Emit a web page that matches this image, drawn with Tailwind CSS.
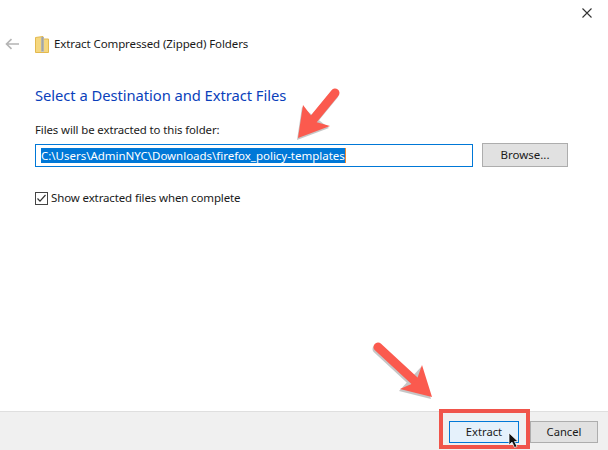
<!DOCTYPE html>
<html lang="en">
<head>
  <meta charset="UTF-8" />
  <title>Extract Compressed (Zipped) Folders</title>
  <script src="https://cdn.jsdelivr.net/npm/@tailwindcss/browser@4"></script>
</head>
<body class="relative w-[608px] h-[450px] overflow-hidden bg-white font-['Noto_Sans',sans-serif] text-[12px] text-[#1a1a1a] flex flex-col">

  <!-- close button -->
  <div class="h-[9px] flex justify-end pr-[16px] pt-[8px]">
    <svg width="10" height="10" viewBox="0 0 10 10" class="shrink-0" fill="none" stroke="#333" stroke-width="1.1"><path d="M0.5 0.5L9.5 9.5M9.5 0.5L0.5 9.5"/></svg>
  </div>

  <!-- title row -->
  <div class="flex items-center h-[20px] mt-[25px] pl-[5px]">
    <svg width="15" height="12" viewBox="0 0 15 12" fill="none" stroke="#b4b4b4" stroke-width="1.6"><path d="M14 6H2M6.5 1.2L1.5 6L6.5 10.8"/></svg>
    <svg class="ml-[15px]" width="14" height="17" viewBox="0 0 14 17">
      <path d="M0.5 1.5L8 0.5V3H13.5V16.5H0.5Z" fill="#f5d77e" stroke="#e3b94f"/>
      <rect x="6" y="1" width="3" height="15" fill="#c4c4c0"/>
      <path d="M6.5 2h2M6.5 4h2M6.5 6h2M6.5 8h2M6.5 10h2M6.5 12h2M6.5 14h2" stroke="#77776f" stroke-width="0.8"/>
    </svg>
    <span class="ml-[5px] text-[11.5px] tracking-[-0.1px]">Extract Compressed (Zipped) Folders</span>
  </div>

  <!-- content -->
  <main class="flex-1 pl-[35px] pr-[40px]">
    <h1 class="mt-[29px] text-[14.75px] leading-[24px] text-[#0a3fbb] tracking-[-0.05px]">Select a Destination and Extract Files</h1>

    <label class="block mt-[15px] text-[11.4px] leading-[16px] tracking-[-0.1px]">Files will be extracted to this folder:</label>
    <div class="flex mt-[5px] gap-[9px] items-center">
      <div class="w-[438px] h-[23px] border border-[#0078d7] flex items-center pl-[5px]">
        <span class="bg-[#0078d7] text-white text-[11.5px] leading-[15px] tracking-[-0.02px] border-r border-[#f08a30] whitespace-nowrap">C:\Users\AdminNYC\Downloads\firefox_policy-templates</span>
      </div>
      <button class="w-[86px] h-[24px] bg-[#e1e1e1] border border-[#adadad] text-[11.5px]">Browse...</button>
    </div>

    <div class="flex items-center mt-[24px] gap-[3px]">
      <div class="w-[13px] h-[13px] border border-[#444] flex items-center justify-center">
        <svg width="11" height="11" viewBox="0 0 11 11" fill="none" stroke="#333" stroke-width="1.2"><path d="M1.5 5.5L4 8.2L9.5 2"/></svg>
      </div>
      <span class="text-[11.5px] leading-[14px] tracking-[-0.13px]">Show extracted files when complete</span>
    </div>
  </main>

  <!-- footer -->
  <footer class="h-[39px] bg-[#f0f0f0] border-t border-[#dfdfdf] flex justify-end items-start pt-[9px] pr-[10px] gap-[11px]">
    <button class="w-[70px] h-[22px] bg-[#e5f1fb] border border-[#0078d7] text-[11.2px]">Extract</button>
    <button class="w-[68px] h-[22px] bg-[#e1e1e1] border border-[#adadad] text-[11.2px]">Cancel</button>
  </footer>

  <!-- highlight box around Extract -->
  <div class="absolute left-[439px] top-[409px] w-[91px] h-[40px] border-[4px] border-[#f0544a]"></div>

  <!-- annotation arrows and mouse pointer -->
  <svg class="absolute inset-0" width="608" height="450" viewBox="0 0 608 450" fill="none">
    <g transform="translate(-1 2)" opacity="0.22">
      <path d="M335 93L312 121" stroke="#000" stroke-width="9" stroke-linecap="round"/>
      <path d="M303 105L298 138L330 126Z" fill="#000"/>
      <path d="M378 347L418 384" stroke="#000" stroke-width="9" stroke-linecap="round"/>
      <path d="M422 365L432 397L400 389Z" fill="#000"/>
    </g>
    <path d="M335 93L312 121" stroke="#fb5a4e" stroke-width="9" stroke-linecap="round"/>
    <path d="M303 105L298 138L330 126L316 122Z" fill="#fb5a4e"/>
    <path d="M378 347L418 384" stroke="#fb5a4e" stroke-width="9" stroke-linecap="round"/>
    <path d="M422 365L432 397L400 389L416 382Z" fill="#fb5a4e"/>
    <path d="M509 433V445L512 442L514.5 447.5L517 446.5L514.5 441.5H518Z" fill="#111" stroke="#fff" stroke-width="0.7"/>
  </svg>
</body>
</html>
